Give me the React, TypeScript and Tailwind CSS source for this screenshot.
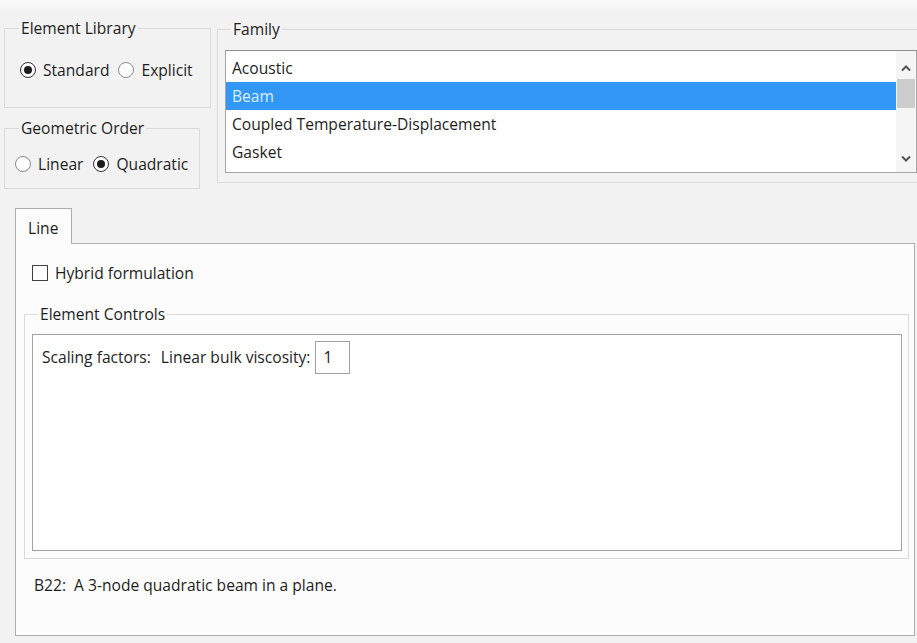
import React from 'react';

function Radio({ label, checked }: { label: string; checked?: boolean }) {
  return (
    <label className="flex items-center gap-[7px] leading-[20px]">
      <span
        className={`flex h-[16px] w-[16px] items-center justify-center rounded-full border bg-white ${
          checked ? 'border-[#333]' : 'border-[#8a8a8a]'
        }`}
      >
        {checked && <span className="h-[8px] w-[8px] rounded-full bg-[#1c1c1c]" />}
      </span>
      <span>{label}</span>
    </label>
  );
}

function Chevron({ up }: { up?: boolean }) {
  return (
    <svg width="10" height="8" viewBox="0 0 10 8" className="mx-auto">
      <polyline
        points={up ? '1,6.5 5,2.5 9,6.5' : '1,1.5 5,5.5 9,1.5'}
        fill="none"
        stroke="#555"
        strokeWidth="2"
      />
    </svg>
  );
}

const families = ['Acoustic', 'Beam', 'Coupled Temperature-Displacement', 'Gasket'];

export default function App() {
  return (
    <div className="h-[643px] w-[917px] overflow-hidden bg-[#f2f2f2] font-['Open_Sans',sans-serif] text-[15.6px] text-[#1e1e1e]">
      {/* top row: library / order on the left, family list on the right */}
      <div className="flex items-start bg-gradient-to-b from-[#fafafa] to-[#f2f2f2] to-[14px] pt-[18px]">
        <div className="ml-[4px] flex flex-col">
          <fieldset className="h-[90px] w-[207px] border border-[#dadada]">
            <legend className="ml-[14px] px-[2px] leading-[20px]">Element Library</legend>
            <div className="flex items-center gap-[9px] pl-[15px] pt-[22px]">
              <Radio label="Standard" checked />
              <Radio label="Explicit" />
            </div>
          </fieldset>
          <fieldset className="mt-[10px] h-[71px] w-[196px] border border-[#dadada]">
            <legend className="ml-[14px] px-[2px] leading-[20px]">Geometric Order</legend>
            <div className="flex items-center gap-[10px] pl-[10px] pt-[16px]">
              <Radio label="Linear" />
              <Radio label="Quadratic" checked />
            </div>
          </fieldset>
        </div>

        <fieldset className="ml-[6px] mt-[1px] h-[164px] w-[701px] shrink-0 border border-[#dadada]">
          <legend className="ml-[13px] px-[2px] leading-[20px]">Family</legend>
          <div className="ml-[7px] mt-[11px] flex h-[123px] w-[692px] border border-[#a6a6a6] border-t-[#8f8f8f] bg-white">
            <div className="flex-1 pt-[3px]">
              {families.map((f) => (
                <div
                  key={f}
                  className={`h-[28px] pl-[6px] leading-[28px] ${
                    f === 'Beam' ? 'bg-[#3397f5] text-[#dcefff]' : ''
                  }`}
                >
                  {f}
                </div>
              ))}
            </div>
            <div className="flex w-[20px] flex-col bg-[#f5f5f5] pb-[9px] pt-[13px]">
              <Chevron up />
              <div className="mx-[1px] mt-[7px] h-[29px] bg-[#cdcdcd]" />
              <div className="flex-1" />
              <Chevron />
            </div>
          </div>
        </fieldset>
      </div>

      {/* tab page */}
      <div className="mt-[19px] ml-[15px]">
        <div className="relative z-10 -mb-px h-[36px] w-[57px] border border-b-0 border-[#adadad] bg-[#fcfcfc] pl-[12px] pt-[9px] leading-[20px]">
          Line
        </div>
        <div className="h-[393px] w-[900px] border border-[#adadad] bg-[#fcfcfc]">
          <label className="flex items-center gap-[7px] pl-[16px] pt-[19px] leading-[20px]">
            <span className="h-[16px] w-[16px] border border-[#404040] bg-white" />
            <span>Hybrid formulation</span>
          </label>

          <fieldset className="ml-[8px] mt-[21px] h-[255px] w-[885px] border border-[#dadada]">
            <legend className="ml-[13px] px-[2px] leading-[20px]">Element Controls</legend>
            <div className="ml-[7px] mt-[10px] h-[217px] w-[870px] border border-[#a3a3a3] bg-white pl-[9px] pt-[6px]">
              <div className="flex items-center">
                <span>Scaling factors:</span>
                <span className="ml-[10px]">Linear bulk viscosity:</span>
                <div className="ml-[5px] h-[33px] w-[35px] border border-[#a0a0a0] bg-white pl-[7px] leading-[31px]">
                  1
                </div>
              </div>
            </div>
          </fieldset>

          <div className="mt-[16px] whitespace-pre pl-[18px] leading-[20px]">B22:  A 3-node quadratic beam in a plane.</div>
        </div>
      </div>
    </div>
  );
}
